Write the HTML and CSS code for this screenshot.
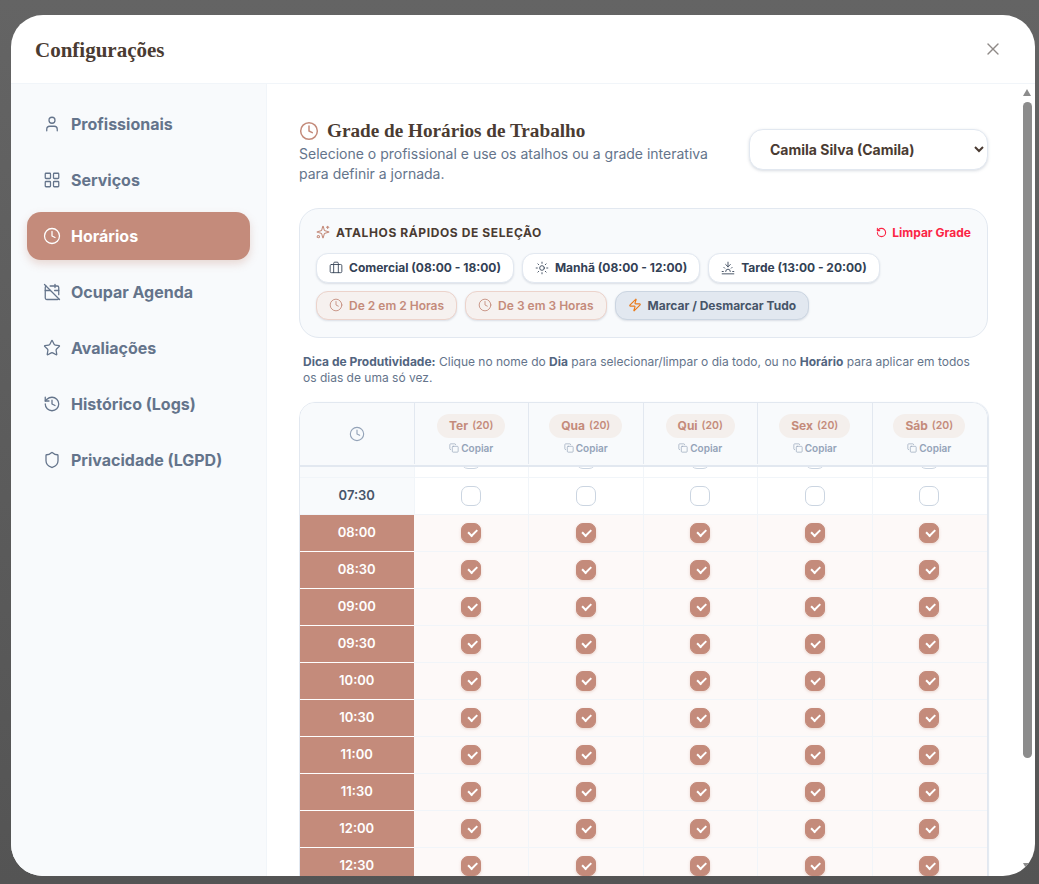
FILE: index.html
```html
<!DOCTYPE html>
<html lang="pt-BR">
<head>
    <meta charset="utf-8">
    <title>Configurações</title>
    <link rel="stylesheet" href="styles.css">
</head>
<body>
    <div class="modal">
        <header class="modal-header">
            <h1>Configurações</h1>
            <svg class="close" viewBox="0 0 24 24"><path d="M18 6 6 18"/><path d="m6 6 12 12"/></svg>
        </header>
        <div class="modal-body">
            <nav class="sidebar">
                <a class="nav-item"><svg viewBox="0 0 24 24"><path d="M19 21v-2a4 4 0 0 0-4-4H9a4 4 0 0 0-4 4v2"/><circle cx="12" cy="7" r="4"/></svg>Profissionais</a>
                <a class="nav-item"><svg viewBox="0 0 24 24"><rect x="3" y="3" width="7" height="7" rx="1"/><rect x="14" y="3" width="7" height="7" rx="1"/><rect x="14" y="14" width="7" height="7" rx="1"/><rect x="3" y="14" width="7" height="7" rx="1"/></svg>Serviços</a>
                <a class="nav-item active"><svg viewBox="0 0 24 24"><circle cx="12" cy="12" r="10"/><polyline points="12 6 12 12 16 14"/></svg>Horários</a>
                <a class="nav-item"><svg viewBox="0 0 24 24"><path d="M4.2 4.2A2 2 0 0 0 3 6v14a2 2 0 0 0 2 2h14a2 2 0 0 0 1.82-1.18"/><path d="M21 15.5V6a2 2 0 0 0-2-2H9.5"/><path d="M16 2v4"/><path d="M3 10h7"/><path d="M21 10h-5.5"/><path d="m2 2 20 20"/></svg>Ocupar Agenda</a>
                <a class="nav-item"><svg viewBox="0 0 24 24"><path d="M11.525 2.295a.53.53 0 0 1 .95 0l2.31 4.679a2.123 2.123 0 0 0 1.595 1.16l5.166.756a.53.53 0 0 1 .294.904l-3.736 3.638a2.123 2.123 0 0 0-.611 1.878l.882 5.14a.53.53 0 0 1-.771.56l-4.618-2.428a2.122 2.122 0 0 0-1.973 0L6.396 21.01a.53.53 0 0 1-.77-.56l.881-5.139a2.122 2.122 0 0 0-.611-1.879L2.16 9.795a.53.53 0 0 1 .294-.906l5.165-.755a2.122 2.122 0 0 0 1.597-1.16z"/></svg>Avaliações</a>
                <a class="nav-item"><svg viewBox="0 0 24 24"><path d="M3 12a9 9 0 1 0 9-9 9.75 9.75 0 0 0-6.74 2.74L3 8"/><path d="M3 3v5h5"/><path d="M12 7v5l4 2"/></svg>Histórico (Logs)</a>
                <a class="nav-item"><svg viewBox="0 0 24 24"><path d="M20 13c0 5-3.5 7.5-7.66 8.95a1 1 0 0 1-.67-.01C7.5 20.5 4 18 4 13V6a1 1 0 0 1 1-1c2 0 4.5-1.2 6.24-2.72a1.17 1.17 0 0 1 1.52 0C14.51 3.81 17 5 19 5a1 1 0 0 1 1 1z"/></svg>Privacidade (LGPD)</a>
            </nav>
            <main class="content">
                <div class="section-head">
                    <div class="section-title">
                        <h2><svg viewBox="0 0 24 24"><circle cx="12" cy="12" r="10"/><polyline points="12 6 12 12 16 14"/></svg>Grade de Horários de Trabalho</h2>
                        <p>Selecione o profissional e use os atalhos ou a grade interativa para definir a jornada.</p>
                    </div>
                    <select class="pro-select">
                        <option>Camila Silva (Camila)</option>
                    </select>
                </div>

                <section class="shortcuts">
                    <div class="shortcuts-head">
                        <span class="shortcuts-title"><svg viewBox="0 0 24 24"><path d="M9.937 15.5A2 2 0 0 0 8.5 14.063l-6.135-1.582a.5.5 0 0 1 0-.962L8.5 9.936A2 2 0 0 0 9.937 8.5l1.582-6.135a.5.5 0 0 1 .963 0L14.063 8.5A2 2 0 0 0 15.5 9.937l6.135 1.581a.5.5 0 0 1 0 .964L15.5 14.063a2 2 0 0 0-1.437 1.437l-1.582 6.135a.5.5 0 0 1-.963 0z"/><path d="M20 2v4"/><path d="M22 4h-4"/><circle cx="4" cy="20" r="2"/></svg>Atalhos Rápidos de Seleção</span>
                        <span class="clear"><svg viewBox="0 0 24 24"><path d="M3 12a9 9 0 1 0 9-9 9.75 9.75 0 0 0-6.74 2.74L3 8"/><path d="M3 3v5h5"/></svg>Limpar Grade</span>
                    </div>
                    <div class="btn-row">
                        <button class="btn"><svg viewBox="0 0 24 24"><path d="M16 20V4a2 2 0 0 0-2-2h-4a2 2 0 0 0-2 2v16"/><rect x="2" y="6" width="20" height="14" rx="2"/></svg>Comercial (08:00 - 18:00)</button>
                        <button class="btn"><svg viewBox="0 0 24 24"><circle cx="12" cy="12" r="4"/><path d="M12 2v2"/><path d="M12 20v2"/><path d="m4.93 4.93 1.41 1.41"/><path d="m17.66 17.66 1.41 1.41"/><path d="M2 12h2"/><path d="M20 12h2"/><path d="m6.34 17.66-1.41 1.41"/><path d="m19.07 4.93-1.41 1.41"/></svg>Manhã (08:00 - 12:00)</button>
                        <button class="btn"><svg viewBox="0 0 24 24"><path d="M12 10V2"/><path d="m4.93 10.93 1.41 1.41"/><path d="M2 18h2"/><path d="M20 18h2"/><path d="m19.07 10.93-1.41 1.41"/><path d="M22 22H2"/><path d="m16 6-4 4-4-4"/><path d="M16 18a4 4 0 0 0-8 0"/></svg>Tarde (13:00 - 20:00)</button>
                    </div>
                    <div class="btn-row">
                        <button class="btn btn-rose"><svg viewBox="0 0 24 24"><circle cx="12" cy="12" r="10"/><polyline points="12 6 12 12 16 14"/></svg>De 2 em 2 Horas</button>
                        <button class="btn btn-rose"><svg viewBox="0 0 24 24"><circle cx="12" cy="12" r="10"/><polyline points="12 6 12 12 16 14"/></svg>De 3 em 3 Horas</button>
                        <button class="btn btn-slate"><svg viewBox="0 0 24 24"><path d="M4 14a1 1 0 0 1-.78-1.63l9.9-10.2a.5.5 0 0 1 .86.46l-1.92 6.02A1 1 0 0 0 13 10h7a1 1 0 0 1 .78 1.63l-9.9 10.2a.5.5 0 0 1-.86-.46l1.92-6.02A1 1 0 0 0 11 14z"/></svg>Marcar / Desmarcar Tudo</button>
                    </div>
                </section>

                <p class="tip"><b>Dica de Produtividade:</b> Clique no nome do <b>Dia</b> para selecionar/limpar o dia todo, ou no <b>Horário</b> para aplicar em todos os dias de uma só vez.</p>

                <div class="grid">
                    <div class="row head">
                        <div class="cell"><svg class="head-clock" viewBox="0 0 24 24"><circle cx="12" cy="12" r="10"/><polyline points="12 6 12 12 16 14"/></svg></div>
                        <div class="cell day"><span class="pill">Ter <small>(20)</small></span><span class="copy"><svg viewBox="0 0 24 24"><rect x="8" y="8" width="14" height="14" rx="2"/><path d="M4 16c-1.100 0-2-.9-2-2V4c0-1.100.9-2 2-2h10c1.100 0 2 .9 2 2"/></svg>Copiar</span></div>
                        <div class="cell day"><span class="pill">Qua <small>(20)</small></span><span class="copy"><svg viewBox="0 0 24 24"><rect x="8" y="8" width="14" height="14" rx="2"/><path d="M4 16c-1.100 0-2-.9-2-2V4c0-1.100.9-2 2-2h10c1.100 0 2 .9 2 2"/></svg>Copiar</span></div>
                        <div class="cell day"><span class="pill">Qui <small>(20)</small></span><span class="copy"><svg viewBox="0 0 24 24"><rect x="8" y="8" width="14" height="14" rx="2"/><path d="M4 16c-1.100 0-2-.9-2-2V4c0-1.100.9-2 2-2h10c1.100 0 2 .9 2 2"/></svg>Copiar</span></div>
                        <div class="cell day"><span class="pill">Sex <small>(20)</small></span><span class="copy"><svg viewBox="0 0 24 24"><rect x="8" y="8" width="14" height="14" rx="2"/><path d="M4 16c-1.100 0-2-.9-2-2V4c0-1.100.9-2 2-2h10c1.100 0 2 .9 2 2"/></svg>Copiar</span></div>
                        <div class="cell day"><span class="pill">Sáb <small>(20)</small></span><span class="copy"><svg viewBox="0 0 24 24"><rect x="8" y="8" width="14" height="14" rx="2"/><path d="M4 16c-1.100 0-2-.9-2-2V4c0-1.100.9-2 2-2h10c1.100 0 2 .9 2 2"/></svg>Copiar</span></div>
                    </div>
                    <div class="grid-body">
                        <div class="row scrolled"><div class="cell time"></div><div class="cell"><i class="slot"></i></div><div class="cell"><i class="slot"></i></div><div class="cell"><i class="slot"></i></div><div class="cell"><i class="slot"></i></div><div class="cell"><i class="slot"></i></div></div>
                        <div class="row"><div class="cell time">07:30</div><div class="cell"><i class="slot"></i></div><div class="cell"><i class="slot"></i></div><div class="cell"><i class="slot"></i></div><div class="cell"><i class="slot"></i></div><div class="cell"><i class="slot"></i></div></div>
                        <div class="row on"><div class="cell time">08:00</div><div class="cell"><i class="slot"></i></div><div class="cell"><i class="slot"></i></div><div class="cell"><i class="slot"></i></div><div class="cell"><i class="slot"></i></div><div class="cell"><i class="slot"></i></div></div>
                        <div class="row on"><div class="cell time">08:30</div><div class="cell"><i class="slot"></i></div><div class="cell"><i class="slot"></i></div><div class="cell"><i class="slot"></i></div><div class="cell"><i class="slot"></i></div><div class="cell"><i class="slot"></i></div></div>
                        <div class="row on"><div class="cell time">09:00</div><div class="cell"><i class="slot"></i></div><div class="cell"><i class="slot"></i></div><div class="cell"><i class="slot"></i></div><div class="cell"><i class="slot"></i></div><div class="cell"><i class="slot"></i></div></div>
                        <div class="row on"><div class="cell time">09:30</div><div class="cell"><i class="slot"></i></div><div class="cell"><i class="slot"></i></div><div class="cell"><i class="slot"></i></div><div class="cell"><i class="slot"></i></div><div class="cell"><i class="slot"></i></div></div>
                        <div class="row on"><div class="cell time">10:00</div><div class="cell"><i class="slot"></i></div><div class="cell"><i class="slot"></i></div><div class="cell"><i class="slot"></i></div><div class="cell"><i class="slot"></i></div><div class="cell"><i class="slot"></i></div></div>
                        <div class="row on"><div class="cell time">10:30</div><div class="cell"><i class="slot"></i></div><div class="cell"><i class="slot"></i></div><div class="cell"><i class="slot"></i></div><div class="cell"><i class="slot"></i></div><div class="cell"><i class="slot"></i></div></div>
                        <div class="row on"><div class="cell time">11:00</div><div class="cell"><i class="slot"></i></div><div class="cell"><i class="slot"></i></div><div class="cell"><i class="slot"></i></div><div class="cell"><i class="slot"></i></div><div class="cell"><i class="slot"></i></div></div>
                        <div class="row on"><div class="cell time">11:30</div><div class="cell"><i class="slot"></i></div><div class="cell"><i class="slot"></i></div><div class="cell"><i class="slot"></i></div><div class="cell"><i class="slot"></i></div><div class="cell"><i class="slot"></i></div></div>
                        <div class="row on"><div class="cell time">12:00</div><div class="cell"><i class="slot"></i></div><div class="cell"><i class="slot"></i></div><div class="cell"><i class="slot"></i></div><div class="cell"><i class="slot"></i></div><div class="cell"><i class="slot"></i></div></div>
                        <div class="row on"><div class="cell time">12:30</div><div class="cell"><i class="slot"></i></div><div class="cell"><i class="slot"></i></div><div class="cell"><i class="slot"></i></div><div class="cell"><i class="slot"></i></div><div class="cell"><i class="slot"></i></div></div>
                    </div>
                </div>

                <div class="scrollbar">
                    <span class="arrow-up"></span>
                    <span class="thumb"></span>
                    <span class="arrow-down"></span>
                </div>
            </main>
        </div>
    </div>
</body>
</html>
```

FILE: styles.css
```css
* {
    box-sizing: border-box;
}
html, body {
    height: 100%;
}
body {
    margin: 0;
    overflow: hidden;
    padding: 15px 4px 8px 11px;
    background: linear-gradient(180deg, #646464, #545454);
    font-family: Inter, "Liberation Sans", sans-serif;
    color: #4a3b32;
}
svg {
    fill: none;
    stroke: currentColor;
    stroke-width: 2;
    stroke-linecap: round;
    stroke-linejoin: round;
    flex-shrink: 0;
}
.modal {
    height: 100%;
    display: flex;
    flex-direction: column;
    background: #fff;
    border-radius: 32px;
    overflow: hidden;
}
.modal-header {
    height: 69px;
    flex-shrink: 0;
    display: flex;
    align-items: center;
    justify-content: space-between;
    padding: 0 32px 0 24px;
    border-bottom: 1px solid #f1f5f9;
}
.modal-header h1 {
    margin: 2px 0 0;
    font-family: "Liberation Serif", serif;
    font-size: 21px;
    font-weight: 700;
    color: #4a3b32;
}
.close {
    width: 20px;
    height: 20px;
    stroke-width: 1.6;
    color: #8f8a87;
}
.modal-body {
    flex: 1;
    min-height: 0;
    display: flex;
}

/* sidebar */
.sidebar {
    width: 256px;
    flex-shrink: 0;
    display: flex;
    flex-direction: column;
    gap: 8px;
    padding: 16px;
    background: #f8fafc;
    border-right: 1px solid #f1f5f9;
}
.nav-item {
    height: 48px;
    display: flex;
    align-items: center;
    gap: 10px;
    padding: 0 16px;
    border-radius: 14px;
    font-size: 16px;
    font-weight: 700;
    color: #64748b;
}
.nav-item svg {
    width: 18px;
    height: 18px;
    stroke-width: 1.7;
}
.nav-item.active {
    background: #c48b7b;
    color: #fff;
    box-shadow: 0 4px 8px rgba(196, 139, 123, .3);
}

/* main */
.content {
    flex: 1;
    min-width: 0;
    position: relative;
    overflow: hidden;
    padding: 35px 47px 0 32px;
}
.section-head {
    display: flex;
    justify-content: space-between;
    align-items: flex-start;
}
.section-title h2 {
    margin: 0;
    display: flex;
    align-items: center;
    gap: 8px;
    font-family: "Liberation Serif", serif;
    font-size: 19.2px;
    line-height: 24px;
    font-weight: 700;
    color: #4a3b32;
}
.section-title h2 svg {
    width: 20px;
    height: 20px;
    stroke-width: 1.8;
    color: #c48b7b;
}
.section-title p {
    width: 420px;
    margin: 1px 0 0;
    font-size: 14px;
    line-height: 20px;
    color: #64748b;
}
.pro-select {
    width: 239px;
    height: 41px;
    margin-top: 10px;
    padding: 0 16px;
    background: #fff;
    border: 1px solid #e2e8f0;
    border-radius: 14px;
    box-shadow: 0 1px 3px rgba(100, 116, 139, .25);
    font-family: inherit;
    font-size: 14px;
    font-weight: 700;
    color: #4a3b32;
}
.shortcuts {
    margin-top: 24px;
    height: 130px;
    padding: 15px 16px 16px;
    background: #f8fafc;
    border: 1px solid #e2e8f0;
    border-radius: 20px;
}
.shortcuts-head {
    height: 16px;
    display: flex;
    justify-content: space-between;
    align-items: center;
    margin-bottom: 13px;
}
.shortcuts-title {
    display: flex;
    align-items: center;
    gap: 6px;
    font-size: 12px;
    font-weight: 700;
    letter-spacing: .6px;
    text-transform: uppercase;
    color: #4a3b32;
}
.shortcuts-title svg {
    width: 14px;
    height: 14px;
    stroke-width: 1.8;
    color: #c48b7b;
}
.clear {
    display: flex;
    align-items: center;
    gap: 5px;
    font-size: 12px;
    font-weight: 700;
    color: #fb2545;
}
.clear svg {
    width: 11px;
    height: 11px;
    stroke-width: 2.4;
}
.btn-row {
    display: flex;
    gap: 8px;
    margin-bottom: 8px;
}
.btn {
    height: 29.5px;
    display: flex;
    align-items: center;
    gap: 6px;
    padding: 0 12px;
    background: #fff;
    border: 1px solid #e2e8f0;
    border-radius: 12px;
    box-shadow: 0 1px 2px rgba(100, 116, 139, .2);
    font-family: inherit;
    font-size: 12px;
    font-weight: 700;
    color: #334155;
}
.btn svg {
    width: 14px;
    height: 14px;
    stroke-width: 1.5;
}
.btn-rose {
    background: #f6f1ef;
    border-color: #ecd3cb;
    font-weight: 600;
    color: #c48b7b;
}
.btn-slate {
    background: #e2e8f0;
    border-color: #cbd5e1;
    color: #475569;
}
.btn-slate svg {
    stroke-width: 1.9;
    color: #ea7a1a;
}
.tip {
    margin: 16px 4px 0;
    font-size: 12px;
    line-height: 16px;
    color: #64748b;
}
.tip b {
    font-weight: 700;
    color: #526580;
}

/* grade */
.grid {
    margin-top: 16px;
    height: 500px;
    border: 1px solid #e2e8f0;
    border-radius: 16px 16px 0 0;
    box-shadow: 1px 0 1px #e2e8f0;
    overflow: hidden;
}
.row {
    display: grid;
    grid-template-columns: repeat(6, 1fr);
    height: 37px;
    border-bottom: 1px solid #f1f5f9;
}
.cell {
    display: flex;
    align-items: center;
    justify-content: center;
    border-right: 1px solid #f1f5f9;
}
.cell:last-child {
    border-right-color: transparent;
}
.row.head {
    height: 64px;
    padding-bottom: 1px;
    background: #f8fafc;
    border-bottom: 2px solid #e2e8f0;
}
.row.head .cell {
    border-right: 1px solid #e2e8f0;
}
.row.head .cell:last-child {
    border-right-color: transparent;
}
.head-clock {
    width: 16px;
    height: 16px;
    stroke-width: 1.7;
    color: #94a3b8;
}
.day {
    flex-direction: column;
    gap: 4px;
}
.pill {
    height: 24px;
    padding: 0 12px;
    display: flex;
    align-items: center;
    gap: 4px;
    border-radius: 12px;
    background: #f4efec;
    font-size: 12px;
    font-weight: 700;
    color: #c48b7b;
}
.pill small {
    font-size: 10.5px;
    font-weight: 600;
}
.copy {
    display: flex;
    align-items: center;
    gap: 2px;
    font-size: 10px;
    font-weight: 600;
    color: #94a3b8;
}
.copy svg {
    width: 10px;
    height: 10px;
    stroke-width: 1.6;
}
.grid-body {
    height: 440px;
    overflow: hidden;
}
.scrolled {
    margin-top: -26px;
}
.time {
    padding-bottom: 2px;
    background: #f8fafc;
    font-size: 13px;
    font-weight: 600;
    color: #475569;
}
.slot {
    width: 20px;
    height: 20px;
    position: relative;
    background: #fff;
    border: 1px solid #cbd5e1;
    border-radius: 7px;
}
.row.on {
    background: #fdf9f8;
}
.row.on .time {
    background: #c48b7b;
    border-right: 0;
    border-bottom: 1px solid #fff;
    margin-bottom: -1px;
    margin-right: 1px;
    color: #fff;
}
.row.on .slot {
    background: #c48b7b;
    border-color: #c48b7b;
    box-shadow: 0 1px 3px rgba(196, 139, 123, .35);
}
.row.on .slot::after {
    content: "";
    position: absolute;
    left: 5.5px;
    top: 5px;
    width: 7px;
    height: 3.5px;
    border-left: 2px solid #fff;
    border-bottom: 2px solid #fff;
    transform: rotate(-45deg);
}

/* barra de rolagem desenhada por cima do conteudo */
.scrollbar {
    position: absolute;
    top: 0;
    right: 3px;
    bottom: 0;
    width: 9px;
}
.arrow-up {
    position: absolute;
    top: 5px;
    left: 0;
    border-left: 4.5px solid transparent;
    border-right: 4.5px solid transparent;
    border-bottom: 7px solid #8c8c8c;
}
.arrow-down {
    position: absolute;
    bottom: 6px;
    left: 0;
    border-left: 4.5px solid transparent;
    border-right: 4.5px solid transparent;
    border-top: 7px solid #8c8c8c;
}
.thumb {
    position: absolute;
    top: 18px;
    left: 0;
    width: 9px;
    height: 656px;
    border-radius: 5px;
    background: #8c8c8c;
}
```
